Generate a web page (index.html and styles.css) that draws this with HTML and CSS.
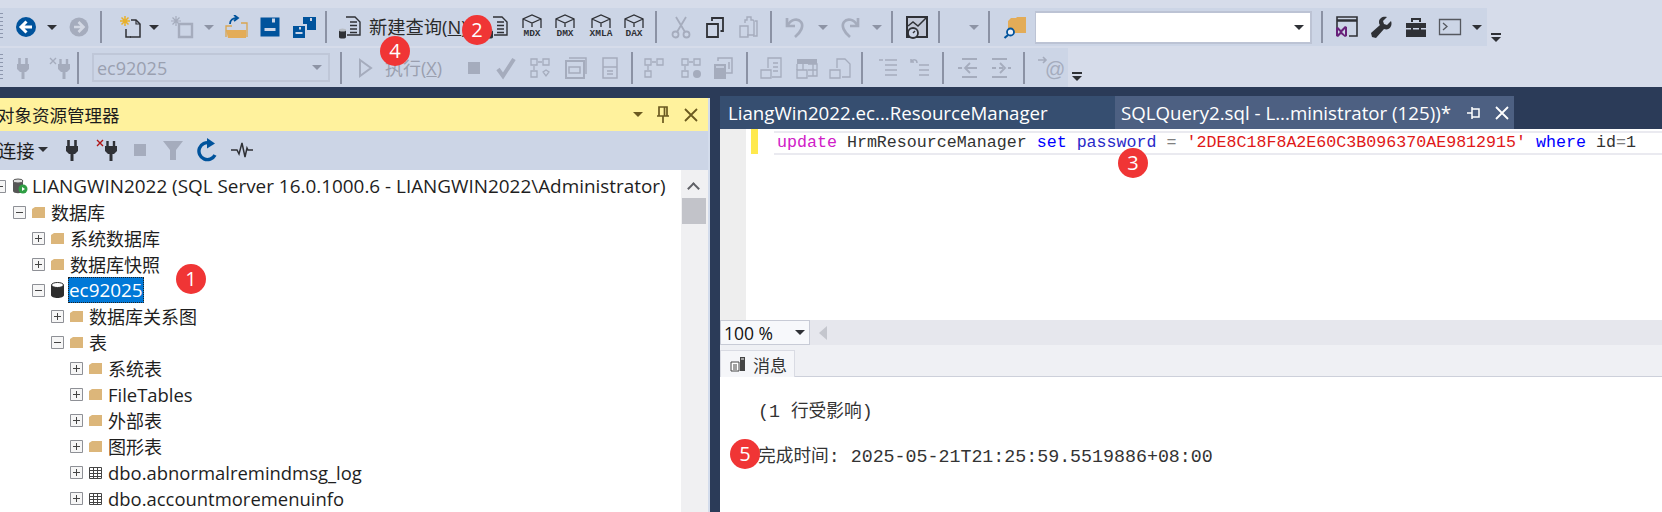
FILE: index.html
```html
<!DOCTYPE html>
<html lang="zh">
<head>
<meta charset="utf-8">
<title>SSMS</title>
<link rel="stylesheet" href="styles.css">
</head>
<body>
<svg class="defs" xmlns="http://www.w3.org/2000/svg">
  <symbol id="plug" viewBox="0 0 24 24"><path d="M8.500 2v6M15.500 2v6" stroke-width="2.600"/><path d="M6 8h12v5l-3 3H9l-3-3z" fill="currentColor" stroke="none"/><path d="M12 15v8" stroke-width="3"/></symbol>
  <symbol id="plugx" viewBox="0 0 24 24"><path d="M12.500 3v5M19 3v5" stroke-width="2.400"/><path d="M10 8h12v5l-3 3h-6l-3-3z" fill="currentColor" stroke="none"/><path d="M16 15v8" stroke-width="3"/><path d="M2 2l6 6M8 2l-6 6" class="xred" stroke-width="1.400"/></symbol>
  <symbol id="back" viewBox="0 0 24 24"><circle cx="12" cy="12" r="10" fill="currentColor" stroke="none"/><path d="M12.500 6.500L7 12l5.500 5.500M7.500 12H18" stroke="#fff" stroke-width="3"/></symbol>
  <symbol id="fwd" viewBox="0 0 24 24"><circle cx="12" cy="12" r="9.500" fill="currentColor" stroke="none"/><path d="M11.500 7l5 5-5 5M16 12H7" stroke="#d3d8e4" stroke-width="2.600"/></symbol>
  <symbol id="newfile" viewBox="0 0 24 24"><path d="M13 5h5l4 4v13h-10" stroke-width="1.500"/><path d="M18 5v4h4" stroke-width="1.200"/><path d="M8 14v8h5" stroke-width="1.500"/><path d="M7 1v10M2 6h10M3.500 2.500l7 7M10.500 2.500l-7 7" class="star" stroke-width="1.500"/></symbol>
  <symbol id="newoff" viewBox="0 0 24 24"><path d="M9 9h13v13H9z" stroke-width="2.400"/><path d="M6 1v10M1 6h10M2.500 2.500l7 7M9.500 2.500l-7 7" stroke-width="1.200"/></symbol>
  <symbol id="open" viewBox="0 0 24 24"><path d="M2 15h20v8H4z" class="tanf" stroke="none"/><path d="M2 22V11h6" class="tanl" stroke-width="1.300"/><path d="M23 22V8h-6" class="tanl" stroke-width="1.300"/><path d="M6 9c0-4 3-6 7-6M10 0l4 3-4 3" class="bluel" stroke-width="1.800"/></symbol>
  <symbol id="save" viewBox="0 0 24 24"><path fill-rule="evenodd" d="M2.500 2.500h19v19h-19zM14 3.500v4h3v-4zM6.500 13v3h11v-3z" fill="currentColor" stroke="none"/></symbol>
  <symbol id="saveall" viewBox="0 0 24 24"><path fill-rule="evenodd" d="M1 11h12v12H1zM7 12v2.500h2V12zM3.500 17v2h7v-2z" fill="currentColor" stroke="none"/><path fill-rule="evenodd" d="M11 2h13v13h-9v-6h-4zM18 3v3h2V3z" fill="currentColor" stroke="none"/></symbol>
  <symbol id="query" viewBox="0 0 24 24"><path d="M8 2h9l5 5v13H9" stroke-width="1.400"/><path d="M12 7h7M12 10.500h7M12 14h7M12 17.500h7" stroke-width="1.300"/><path d="M1 15.500h7V22a3.500 1.500 0 0 1-7 0z" fill="currentColor" stroke="none"/><ellipse cx="4.500" cy="15" rx="3.500" ry="1.500" fill="#b8bdc4" stroke="none"/></symbol>
  <symbol id="cube" viewBox="0 0 24 15"><path d="M3 14V5l9-4 9 4v9M3 5l9 4 9-4M12 9v4" stroke-width="1.300"/></symbol>
  <symbol id="cut" viewBox="0 0 24 24"><path d="M7 2l9 15M17 2L8 17" stroke-width="1.800"/><circle cx="6.500" cy="19.500" r="3" stroke-width="1.800"/><circle cx="17.500" cy="19.500" r="3" stroke-width="1.800"/></symbol>
  <symbol id="copy" viewBox="0 0 24 24"><path d="M4 9h11v13H4z" stroke-width="1.800"/><path d="M9 6V3h11v13h-2.500" stroke-width="1.800"/></symbol>
  <symbol id="paste" viewBox="0 0 24 24"><path d="M9 8V5h2V2h4v3h2l1 1v14h-7" stroke-width="1.400"/><path d="M4 11h8v11H4z" stroke-width="1.400"/><path d="M19 6h2v15h-4" stroke-width="1.400"/></symbol>
  <symbol id="undo" viewBox="0 0 24 24"><path d="M4 3v8h8" stroke-width="2.700"/><path d="M5 10c3-6 10-7 13-3 3 4 0 10-6 15" stroke-width="2.700"/></symbol>
  <symbol id="redo" viewBox="0 0 24 24"><path d="M20 3v8h-8" stroke-width="2.700"/><path d="M19 10c-3-6-10-7-13-3-3 4 0 10 6 15" stroke-width="2.700"/></symbol>
  <symbol id="monitor" viewBox="0 0 24 24"><path d="M2 2h20v20H2z" fill="#b7bcc8" fill-opacity=".5" stroke-width="2"/><path d="M3 11l5-4 5 4 8-8" stroke-width="1.500"/><circle cx="8" cy="18" r="5" fill="#ccd4e6" stroke-width="1.800"/><path d="M8 18l2-2" stroke-width="1.500"/></symbol>
  <symbol id="fsearch" viewBox="0 0 24 24"><path d="M5 6l3-3h5l1-1h9v16H5z" class="tanf2" stroke="none"/><circle cx="7.500" cy="17" r="3.500" fill="#e9eef8" class="bluel" stroke-width="1.800"/><path d="M5 20l-3.500 3" class="bluel" stroke-width="2.200"/></symbol>
  <symbol id="vswin" viewBox="0 0 24 24"><path d="M3 13V2h20v19h-8" stroke-width="1.600"/><path d="M3 5.500h20" stroke-width="2.500"/><path d="M2 13v8l2 1 3-3 4 3 2-1V12l-2-1-4 4-3-3zM4 15l2 2-2 2zM11 14v6l-3-3z" class="vsp" stroke="none" fill-rule="evenodd"/></symbol>
  <symbol id="wrench" viewBox="0 0 24 24"><path d="M22 6l-4 4-3-1-1-3 4-4c-4-1-8 1-8 5 0 1 0 2 1 3L2 18l1 4 4 1 8-9c5 2 9-3 7-8z" fill="currentColor" stroke="none"/></symbol>
  <symbol id="toolbox" viewBox="0 0 24 24"><path fill-rule="evenodd" d="M2 8h20v14H2zM2 13v1.500h5V13zM17 13v1.500h5V13zM9 13v1.500h6V13z" fill="currentColor" stroke="none"/><path d="M8 7V4h8v3" stroke-width="2"/></symbol>
  <symbol id="cmd" viewBox="0 0 24 24"><path d="M1.500 4.500h21v15h-21z" stroke-width="1.300"/><path d="M5 8l4 3.500L5 15" stroke-width="1.300"/></symbol>
  <symbol id="play" viewBox="0 0 24 24"><path d="M7 4l11 8-11 8z" stroke-width="2"/></symbol>
  <symbol id="check" viewBox="0 0 24 24"><path d="M4 13l5 7L20 3" stroke-width="4"/></symbol>
  <symbol id="flow" viewBox="0 0 24 24"><path d="M3 3h6v6H3zM15 3h6v6h-6zM3 15h6v6H3zM15 16l3-2 3 2-3 4z" stroke-width="1.300"/><path d="M10 6h4M6 10v4" stroke-width="1.300"/></symbol>
  <symbol id="flow1" viewBox="0 0 24 24"><path d="M3 3h6v6H3zM15 3h6v6h-6zM3 15h6v6H3z" stroke-width="1.300"/><path d="M10 6h4M6 10v4" stroke-width="1.300"/></symbol>
  <symbol id="wind" viewBox="0 0 24 24"><path d="M2 5h18v17H2z" stroke-width="2"/><path d="M5 2h17v16" stroke-width="1.500"/><path d="M5 11h11v6H5z" stroke-width="1.500"/></symbol>
  <symbol id="sheet" viewBox="0 0 24 24"><path d="M5 2h14v20H5z" stroke-width="1.500"/><path d="M5 11h14M9 15h6M9 18h6" stroke-width="1.300"/></symbol>
  <symbol id="flow2" viewBox="0 0 24 24"><path d="M3 3h6v6H3zM15 3h6v6h-6zM3 15h6v6H3z" stroke-width="1.300"/><path d="M10 6h4M6 10v4" stroke-width="1.300"/><circle cx="18" cy="18" r="4" fill="currentColor" stroke="none"/></symbol>
  <symbol id="calc" viewBox="0 0 24 24"><path d="M2 8h12v15H2z" fill="currentColor" stroke="none"/><path d="M6 5V2h14v15h-6M17 6v7" stroke-width="1.500"/><path d="M4 11h8" stroke="#ccd4e6" stroke-width="1.500"/></symbol>
  <symbol id="res1" viewBox="0 0 24 24"><path d="M9 12V2h13v19H13" stroke-width="1.300"/><path d="M14 7h5M14 11h5M14 15h5" stroke-width="1.300"/><path d="M2 14h10v8H2z" stroke-width="1.300"/></symbol>
  <symbol id="res2" viewBox="0 0 24 24"><path d="M2 3h20v5H2z" fill="currentColor" stroke="none"/><path d="M13 8h9v12h-9M13 14h9M18 8v12M2 8v6M8 8v6" stroke-width="1.300"/><path d="M2 14h10v8H2z" stroke-width="1.300"/></symbol>
  <symbol id="res3" viewBox="0 0 24 24"><path d="M9 12V3h8l5 5v13H14" stroke-width="1.300"/><path d="M2 14h10v8H2z" stroke-width="1.300"/></symbol>
  <symbol id="lines" viewBox="0 0 24 24"><path d="M3 4h4M9 4h12M9 9h12M9 14h12M9 19h12" stroke-width="1.500"/></symbol>
  <symbol id="lines2" viewBox="0 0 24 24"><path d="M3 6c2-3 6-3 6 1M3 3v3h3M11 9h10M11 14h10M11 19h10" stroke-width="1.500"/></symbol>
  <symbol id="outdent" viewBox="0 0 24 24"><path d="M6 3h15M6 21h15M2 12h4M10 12h11M14 7l-5 5 5 5" stroke-width="1.800"/></symbol>
  <symbol id="indent" viewBox="0 0 24 24"><path d="M3 3h15M3 21h15M3 12h4M10 12h4M19 12h3M11 7l5 5-5 5" stroke-width="1.800"/></symbol>
  <symbol id="stop" viewBox="0 0 24 24"><path d="M6 6h12v12H6z" fill="currentColor" stroke="none"/></symbol>
  <symbol id="filter" viewBox="0 0 24 24"><path d="M2 3h20l-7 9v10h-6V12z" fill="currentColor" stroke="none"/></symbol>
  <symbol id="refresh" viewBox="0 0 24 24"><path d="M19 17a8.500 8.500 0 1 1-5-12" stroke-width="3.400"/><path d="M11 0l8 5.500-8 5z" fill="currentColor" stroke="none"/></symbol>
  <symbol id="pulse" viewBox="0 0 24 24"><path d="M1 12h6l2 4 3-11 3 14 2-9 1 2h5" stroke-width="1.500"/></symbol>
  <symbol id="pin" viewBox="0 0 16 20"><path d="M4 2h8v9H4zM9.500 2v9M2 11h12M8 11v7" stroke-width="1.700"/></symbol>
  <symbol id="close" viewBox="0 0 16 16"><path d="M2 2l12 12M14 2L2 14" stroke-width="1.800"/></symbol>
  <symbol id="pinh" viewBox="0 0 16 16"><path d="M6 4h7v8H6zM6 8H1M6 2v12" stroke-width="1.500"/></symbol>
  <symbol id="folder" viewBox="0 0 13 13"><path d="M0 3l3-2h10v11H0z" fill="#dcb67a"/></symbol>
  <symbol id="eplus" viewBox="0 0 13 13"><path d="M.5.500h12v12H.5z" fill="#f6f6f6" stroke="#8e9096"/><path d="M3 6.500h7M6.500 3v7" stroke="#444"/></symbol>
  <symbol id="eminus" viewBox="0 0 13 13"><path d="M.5.500h12v12H.5z" fill="#f6f6f6" stroke="#8e9096"/><path d="M3 6.500h7" stroke="#444"/></symbol>
  <symbol id="table" viewBox="0 0 13 13"><path d="M.5 1.500h12v11H.5zM.5 4.500h12M.5 7.500h12M.5 10.500h12M4.500 1.500v11M8.500 1.500v11" fill="none" stroke="#444"/></symbol>
  <symbol id="dbk" viewBox="0 0 13 16"><path d="M0 3v10c0 4 13 4 13 0V3z" fill="#2e2e2e"/><ellipse cx="6.500" cy="3" rx="6" ry="2.500" fill="#fff" stroke="#2e2e2e"/></symbol>
  <symbol id="dbs" viewBox="0 0 16 16"><path d="M1 3v10c0 3 10 3 10 0V3z" fill="#555"/><ellipse cx="6" cy="3" rx="5" ry="2" fill="#ddd" stroke="#555"/><circle cx="11" cy="11" r="4.500" fill="#2f9e44"/><path d="M10 9l3 2-3 2z" fill="#fff"/></symbol>
  <symbol id="msg" viewBox="0 0 16 16"><path d="M1 6h8v9H1z" fill="#fff" stroke="#444"/><path d="M3 9h4M3 11h4M3 13h4" stroke="#444"/><path d="M10 1h5v14h-5z" fill="#444"/><path d="M11 3h3" stroke="#fff"/></symbol>
</svg>

<div class="app">
  <header class="bars">
    <div class="row row1">
      <div class="band band1">
        <span class="grip"></span>
        <svg class="ic blue m11"><use href="#back"/></svg>
        <span class="dd m9"></span>
        <svg class="ic off m10"><use href="#fwd"/></svg>
        <span class="sep m9"></span>
        <svg class="ic dark m16"><use href="#newfile"/></svg>
        <span class="dd m7"></span>
        <svg class="ic off m11"><use href="#newoff"/></svg>
        <span class="dd dd-off"></span>
        <svg class="ic blue"><use href="#open"/></svg>
        <svg class="ic blue"><use href="#save"/></svg>
        <svg class="ic blue"><use href="#saveall"/></svg>
        <span class="sep m9"></span>
        <svg class="ic dark m11"><use href="#query"/></svg>
        <span class="qlabel m7">新建查询(<u>N</u>)</span>
        <svg class="ic dark m15"><use href="#query"/></svg>
        <span class="cube m11"><svg class="cube-ic"><use href="#cube"/></svg><span class="cube-t">MDX</span></span>
        <span class="cube m9"><svg class="cube-ic"><use href="#cube"/></svg><span class="cube-t">DMX</span></span>
        <span class="cube m12"><svg class="cube-ic"><use href="#cube"/></svg><span class="cube-t">XMLA</span></span>
        <span class="cube m9"><svg class="cube-ic"><use href="#cube"/></svg><span class="cube-t">DAX</span></span>
        <span class="sep m9"></span>
        <svg class="ic off m12"><use href="#cut"/></svg>
        <svg class="ic dark"><use href="#copy"/></svg>
        <svg class="ic off m9"><use href="#paste"/></svg>
        <span class="sep"></span>
        <svg class="ic off m11"><use href="#undo"/></svg>
        <span class="dd dd-off m11"></span>
        <svg class="ic off"><use href="#redo"/></svg>
        <span class="dd dd-off"></span>
        <span class="sep m9"></span>
        <svg class="ic dark m12"><use href="#monitor"/></svg>
        <span class="sep m9"></span>
        <span class="dd dd-off m29"></span>
        <span class="sep m9"></span>
        <svg class="ic blue m13"><use href="#fsearch"/></svg>
        <span class="combo-white m8"><span class="dd"></span></span>
        <span class="sep m9"></span>
        <svg class="ic dark m11"><use href="#vswin"/></svg>
        <svg class="ic dark m11"><use href="#wrench"/></svg>
        <svg class="ic dark m11"><use href="#toolbox"/></svg>
        <svg class="ic gray"><use href="#cmd"/></svg>
        <span class="dd"></span>
      </div>
      <span class="over over1"></span>
    </div>
    <div class="row row2">
      <div class="band band2">
        <span class="grip"></span>
        <svg class="ic off m8"><use href="#plug"/></svg>
        <svg class="ic off m13"><use href="#plugx"/></svg>
        <span class="sep m5"></span>
        <span class="combo-off m13">ec92025<span class="dd dd-off"></span></span>
        <span class="sep"></span>
        <svg class="ic off m11"><use href="#play"/></svg>
        <span class="exec m8">执行(<u>X</u>)</span>
        <svg class="ic off m19"><use href="#stop"/></svg>
        <svg class="ic off m8"><use href="#check"/></svg>
        <svg class="ic off"><use href="#flow"/></svg>
        <svg class="ic off m12"><use href="#wind"/></svg>
        <svg class="ic off"><use href="#sheet"/></svg>
        <span class="sep m9"></span>
        <svg class="ic off m9"><use href="#flow1"/></svg>
        <svg class="ic off m13"><use href="#flow2"/></svg>
        <svg class="ic off m9"><use href="#calc"/></svg>
        <span class="sep"></span>
        <svg class="ic off m11"><use href="#res1"/></svg>
        <svg class="ic off m12"><use href="#res2"/></svg>
        <svg class="ic off m9"><use href="#res3"/></svg>
        <span class="sep m9"></span>
        <svg class="ic off m13"><use href="#lines"/></svg>
        <svg class="ic off m8"><use href="#lines2"/></svg>
        <span class="sep"></span>
        <svg class="ic off m12"><use href="#outdent"/></svg>
        <svg class="ic off m9"><use href="#indent"/></svg>
        <span class="sep"></span>
        <span class="at m12"><svg class="at-arrow" viewBox="0 0 12 12"><path d="M1 4h8M6 1l3 3-3 3"/></svg>@</span>
      </div>
      <span class="over over2"></span>
    </div>
  </header>

  <main class="work">
    <section class="explorer">
      <div class="oe-title">
        <span class="oe-name">对象资源管理器</span>
        <span class="dd dd-title"></span>
        <svg class="oe-pin"><use href="#pin"/></svg>
        <svg class="oe-x"><use href="#close"/></svg>
      </div>
      <div class="oe-tools">
        <span class="connect">连接</span><span class="dd dd-conn"></span>
        <svg class="ic dark t1"><use href="#plug"/></svg>
        <svg class="ic dark t4"><use href="#plugx"/></svg>
        <svg class="ic off t2"><use href="#stop"/></svg>
        <svg class="ic off t2"><use href="#filter"/></svg>
        <svg class="ic blue t4"><use href="#refresh"/></svg>
        <svg class="ic dark t3"><use href="#pulse"/></svg>
      </div>
      <div class="oe-body">
        <ul class="tree">
          <li class="node l0 big"><svg class="exp"><use href="#eminus"/></svg><svg class="nic nic-root"><use href="#dbs"/></svg><span>LIANGWIN2022 (SQL Server 16.0.1000.6 - LIANGWIN2022\Administrator)</span></li>
          <li class="node l1"><svg class="exp"><use href="#eminus"/></svg><svg class="nic"><use href="#folder"/></svg><span>数据库</span></li>
          <li class="node l2"><svg class="exp"><use href="#eplus"/></svg><svg class="nic"><use href="#folder"/></svg><span>系统数据库</span></li>
          <li class="node l2"><svg class="exp"><use href="#eplus"/></svg><svg class="nic"><use href="#folder"/></svg><span>数据库快照</span></li>
          <li class="node l2 big"><svg class="exp"><use href="#eminus"/></svg><svg class="nic nic-db"><use href="#dbk"/></svg><span class="sel">ec92025</span></li>
          <li class="node l3"><svg class="exp"><use href="#eplus"/></svg><svg class="nic"><use href="#folder"/></svg><span>数据库关系图</span></li>
          <li class="node l3"><svg class="exp"><use href="#eminus"/></svg><svg class="nic"><use href="#folder"/></svg><span>表</span></li>
          <li class="node l4"><svg class="exp"><use href="#eplus"/></svg><svg class="nic"><use href="#folder"/></svg><span>系统表</span></li>
          <li class="node l4 lat"><svg class="exp"><use href="#eplus"/></svg><svg class="nic"><use href="#folder"/></svg><span>FileTables</span></li>
          <li class="node l4"><svg class="exp"><use href="#eplus"/></svg><svg class="nic"><use href="#folder"/></svg><span>外部表</span></li>
          <li class="node l4"><svg class="exp"><use href="#eplus"/></svg><svg class="nic"><use href="#folder"/></svg><span>图形表</span></li>
          <li class="node l4 lat"><svg class="exp"><use href="#eplus"/></svg><svg class="nic"><use href="#table"/></svg><span>dbo.abnormalremindmsg_log</span></li>
          <li class="node l4 lat"><svg class="exp"><use href="#eplus"/></svg><svg class="nic"><use href="#table"/></svg><span>dbo.accountmoremenuinfo</span></li>
        </ul>
        <div class="vscroll"><span class="chev"></span><span class="thumb"></span></div>
      </div>
    </section>

    <section class="docs">
      <div class="tabs">
        <div class="tab tab-a">LiangWin2022.ec...ResourceManager</div>
        <div class="tab tab-b">SQLQuery2.sql - L...ministrator (125))*<svg class="tab-pin"><use href="#pinh"/></svg><svg class="tab-x"><use href="#close"/></svg></div>
      </div>
      <div class="editor">
        <div class="gutter"></div>
        <div class="changed"></div>
        <div class="code"><span class="k-m">update</span> HrmResourceManager <span class="k-b">set</span> <span class="k-n">password</span> <span class="k-g">=</span> <span class="k-r">'2DE8C18F8A2E60C3B096370AE9812915'</span> <span class="k-b">where</span> id<span class="k-g">=</span>1</div>
      </div>
      <div class="zoombar">
        <div class="zoomcombo">100 %<span class="dd"></span></div>
        <span class="larrow"></span>
      </div>
      <div class="rtabs">
        <div class="rtab"><svg class="msg-ic"><use href="#msg"/></svg>消息</div>
      </div>
      <div class="msgs">
        <p class="line">(1 <span class="cjk">行受影响</span>)</p>
        <p class="line"><span class="cjk">完成时间</span>: 2025-05-21T21:25:59.5519886+08:00</p>
      </div>
    </section>
  </main>

  <span class="badge b1">1</span>
  <span class="badge b2">2</span>
  <span class="badge b3">3</span>
  <span class="badge b4">4</span>
  <span class="badge b5">5</span>
</div>
</body>
</html>
```

FILE: styles.css
```css
* { box-sizing: border-box; }
html, body { margin: 0; padding: 0; }
body { width: 1662px; height: 512px; overflow: hidden; background: #2b3b58; font-family: "Open Sans", "Noto Sans CJK SC", sans-serif; color: #1e1e1e; }
.defs { display: none; }
.app { position: relative; width: 1662px; height: 512px; display: flex; flex-direction: column; }

/* toolbars */
.bars { height: 87px; background: #d6dcea; flex: none; }
.row { display: flex; align-items: center; }
.row1 { height: 46px; padding-top: 8px; }
.row2 { height: 41px; padding-top: 2px; }
.band { display: flex; align-items: center; height: 100%; background: #ccd5e6; }
.band1 { width: 1487px; }
.band2 { width: 1068px; }
.band > * { flex: none; margin-left: 10px; }
.band > .grip { margin-left: 0; width: 3px; height: 28px; background: repeating-linear-gradient(#8d97ad 0 1px, transparent 1px 4px); }
.band > .m5 { margin-left: 5px; }
.band > .m7 { margin-left: 7px; }
.band > .m8 { margin-left: 8px; }
.band > .m9 { margin-left: 9px; }
.band > .m11 { margin-left: 11px; }
.band > .m12 { margin-left: 12px; }
.band > .m13 { margin-left: 13px; }
.band > .m15 { margin-left: 15px; }
.band > .m16 { margin-left: 16px; }
.band > .m19 { margin-left: 19px; }
.band > .m29 { margin-left: 29px; }

.ic { width: 24px; height: 24px; fill: none; stroke: currentColor; display: block; --x: #b01515; --st: #e8b02a; }
.dark { color: #2f3136; }
.gray { color: #55585f; }
.blue { color: #00539c; }
.off { color: #a5acbd; --x: #a5acbd; --st: #a5acbd; }
.xred { stroke: var(--x); }
.star { stroke: var(--st); }
.tanf { fill: #e3ac58; }
.tanl { stroke: #d9a550; }
.tanf2 { fill: #e3ac58; }
.bluel { stroke: #00539c; }
.vsp { fill: #68217a; }

.dd { display: block; width: 10px; height: 5px; position: relative; }
.dd::after { content: ""; display: block; width: 0; height: 0; margin: 0 auto; border-left: 5px solid transparent; border-right: 5px solid transparent; border-top: 5px solid #2f3136; }
.dd-off::after { border-top-color: #8d94a5; }
.sep { display: block; width: 2px; height: 32px; background: #8b92a4; }
.qlabel { display: block; width: 101px; font-size: 18.300px; line-height: 24px; white-space: nowrap; color: #2a2a2a; }
.exec { display: block; width: 58px; font-size: 18px; line-height: 24px; white-space: nowrap; color: #9a9faf; }
.cube { display: flex; flex-direction: column; align-items: center; width: 24px; height: 26px; color: #2f3136; }
.cube-ic { width: 24px; height: 15px; fill: none; stroke: currentColor; flex: none; }
.cube-t { font-family: "Liberation Mono", monospace; font-weight: bold; font-size: 9.500px; line-height: 10px; white-space: nowrap; }
.combo-white { display: flex; align-items: center; justify-content: flex-end; width: 277px; height: 33px; background: #fff; border: 2px solid #bcc3d4; border-width: 2px 2px 2px 1px; padding-right: 6px; }
.combo-off { display: flex; align-items: center; justify-content: space-between; width: 238px; height: 29px; border: 2px solid #bfc7d8; background: #ccd5e6; padding: 0 6px 0 3px; font-size: 18px; color: #9aa0b0; }
.at { display: flex; align-items: flex-end; width: 28px; height: 24px; font-family: "Liberation Sans", sans-serif; font-size: 20px; line-height: 22px; color: #a5acbd; }
.at-arrow { width: 12px; height: 12px; flex: none; margin-right: -4px; align-self: flex-start; fill: none; stroke: #a5acbd; stroke-width: 1.600; }
.over { display: block; width: 10px; height: 8px; flex: none; border-top: 2px solid #2f3136; }
.over::after { content: ""; display: block; width: 0; margin: 2px auto 0; border-left: 5px solid transparent; border-right: 5px solid transparent; border-top: 5px solid #2f3136; }
.over1 { margin: 20px 0 0 4px; }
.over2 { margin: 16px 0 0 4px; }

/* main */
.work { flex: 1; display: flex; min-height: 0; }
.explorer { width: 710px; margin-top: 11px; display: flex; flex-direction: column; flex: none; border-right: 2px solid #d3dcec; background: #ccd5e6; }
.oe-title { height: 33px; flex: none; display: flex; align-items: center; background: #fff29d; }
.oe-name { margin-left: -3px; font-size: 17.500px; color: #1c1c1c; white-space: nowrap; flex: none; width: 636px; }
.dd-title::after { border-top-color: #6b5a20; }
.oe-pin { width: 16px; height: 20px; margin-left: 12px; fill: none; stroke: #6b5a20; }
.oe-x { width: 16px; height: 16px; margin-left: 12px; fill: none; stroke: #6b5a20; }
.oe-tools { height: 37px; flex: none; display: flex; align-items: center; margin-bottom: 2px; }
.connect { font-size: 18.300px; margin-left: -2px; white-space: nowrap; }
.dd-conn { margin-left: 3px; }
.t1 { margin-left: 12px; }
.t2 { margin-left: 9px; }
.t3 { margin-left: 10px; }
.t4 { margin-left: 11px; }
.oe-body { flex: 1; display: flex; background: #fff; min-height: 0; }
.tree { flex: 1; min-width: 0; margin: 0; padding: 3px 0 0; list-style: none; overflow: hidden; }
.node { height: 26px; display: flex; align-items: center; font-size: 18px; white-space: nowrap; color: #1e1e1e; }
.lat { font-size: 18.450px; }
.big { font-size: 18.900px; }
.exp { width: 13px; height: 13px; flex: none; margin-right: 6px; }
.nic { width: 13px; height: 13px; flex: none; margin-right: 6px; }
.nic-root { width: 16px; height: 16px; margin-right: 4px; }
.nic-db { height: 16px; margin-right: 5px; }
.l0 { margin-left: -7px; }
.l1 { padding-left: 13px; }
.l2 { padding-left: 32px; }
.l3 { padding-left: 51px; }
.l4 { padding-left: 70px; }
.sel { background: #0078d7; color: #fff; outline: 1px dotted #222; outline-offset: -1px; height: 26px; line-height: 26px; padding: 0 1px; margin-left: -1px; }
.vscroll { width: 27px; flex: none; background: #f0f0f2; display: flex; flex-direction: column; align-items: center; padding-right: 2px; }
.chev { width: 9px; height: 9px; border-left: 2px solid #5f6066; border-top: 2px solid #5f6066; transform: rotate(45deg); margin-top: 14px; }
.thumb { width: 24px; height: 26px; background: #c2c3c9; margin-top: 5px; }

.docs { flex: 1; min-width: 0; margin-left: 10px; padding-top: 9px; display: flex; flex-direction: column; background: #2b3b58; }
.tabs { height: 33px; flex: none; display: flex; font-size: 18.700px; color: #fff; }
.tab { display: flex; align-items: center; white-space: nowrap; }
.tab-a { width: 395px; padding-left: 8px; background: #364e70; }
.tab-b { width: 399px; padding-left: 6px; background: #4d6082; }
.tab-pin { width: 16px; height: 16px; margin-left: 15px; fill: none; stroke: #fff; flex: none; }
.tab-x { width: 16px; height: 16px; margin-left: 12px; fill: none; stroke: #fff; flex: none; }
.editor { height: 191px; flex: none; display: flex; align-items: flex-start; background: #fff; }
.gutter { width: 26px; height: 100%; background: #eeeeee; flex: none; }
.changed { width: 7px; height: 25px; margin-left: 5px; background: #ffe94d; flex: none; }
.code { flex: 1; min-width: 0; height: 24px; margin: 2px 0 0 16px; padding-left: 3px; border: 2px solid #eaeaf0; border-width: 2px 0; font-family: "Liberation Mono", monospace; font-size: 16.650px; line-height: 20px; white-space: pre; color: #333; }
.k-m { color: #d020c8; }
.k-b { color: #0000ff; }
.k-n { color: #2a2ac8; }
.k-g { color: #808080; }
.k-r { color: #e01818; }
.zoombar { height: 25px; flex: none; display: flex; align-items: center; background: #e6e7ed; }
.zoomcombo { width: 90px; height: 25px; display: flex; align-items: center; justify-content: space-between; background: #f7f8fb; border: 1px solid #c8cbd6; padding: 0 4px 0 3px; font-size: 17.500px; color: #111; }
.larrow { width: 0; height: 0; margin-left: 9px; border-top: 7px solid transparent; border-bottom: 7px solid transparent; border-right: 8px solid #c4c6cd; }
.rtabs { height: 32px; flex: none; background: #eff0f4; border-bottom: 1px solid #cdd0da; padding-top: 5px; }
.rtab { width: 75px; height: 27px; display: flex; align-items: center; background: #f5f6f9; border: 1px solid #d9dbe3; border-bottom: 0; padding-left: 9px; font-size: 17px; color: #333; }
.msg-ic { width: 16px; height: 16px; margin-right: 7px; flex: none; }
.msgs { flex: 1; background: #fff; padding: 10px 0 0 38px; font-family: "Liberation Mono", monospace; font-size: 18.300px; color: #333; }
.line { margin: 0; height: 45px; line-height: 45px; white-space: pre; }
.cjk { font-family: "Noto Sans CJK SC", sans-serif; font-size: 17.700px; }

/* numbered markers over the screenshot */
.badge { position: absolute; width: 30px; height: 30px; border-radius: 50%; background: #f03535; color: #fff; font-size: 20px; line-height: 30px; text-align: center; font-family: "Open Sans", sans-serif; }
.b1 { left: 176px; top: 264px; }
.b2 { left: 462px; top: 15px; }
.b3 { left: 1118px; top: 148px; }
.b4 { left: 380px; top: 36px; }
.b5 { left: 730px; top: 439px; }
```
